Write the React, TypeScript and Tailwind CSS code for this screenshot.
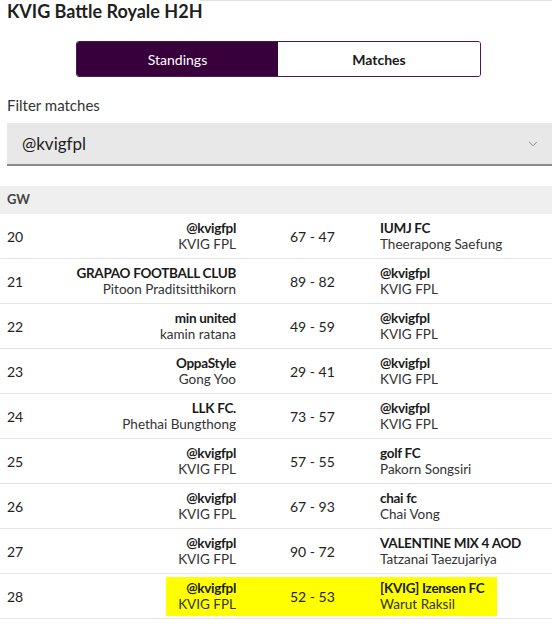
import { ChevronDown } from "lucide-react";

type Match = {
  gw: number;
  home: string;
  homeManager: string;
  score: string;
  away: string;
  awayManager: string;
  highlight?: boolean;
};

const matches: Match[] = [
  { gw: 20, home: "@kvigfpl", homeManager: "KVIG FPL", score: "67 - 47", away: "IUMJ FC", awayManager: "Theerapong Saefung" },
  { gw: 21, home: "GRAPAO FOOTBALL CLUB", homeManager: "Pitoon Praditsitthikorn", score: "89 - 82", away: "@kvigfpl", awayManager: "KVIG FPL" },
  { gw: 22, home: "min united", homeManager: "kamin ratana", score: "49 - 59", away: "@kvigfpl", awayManager: "KVIG FPL" },
  { gw: 23, home: "OppaStyle", homeManager: "Gong Yoo", score: "29 - 41", away: "@kvigfpl", awayManager: "KVIG FPL" },
  { gw: 24, home: "LLK FC.", homeManager: "Phethai Bungthong", score: "73 - 57", away: "@kvigfpl", awayManager: "KVIG FPL" },
  { gw: 25, home: "@kvigfpl", homeManager: "KVIG FPL", score: "57 - 55", away: "golf FC", awayManager: "Pakorn Songsiri" },
  { gw: 26, home: "@kvigfpl", homeManager: "KVIG FPL", score: "67 - 93", away: "chai fc", awayManager: "Chai Vong" },
  { gw: 27, home: "@kvigfpl", homeManager: "KVIG FPL", score: "90 - 72", away: "VALENTINE MIX 4 AOD", awayManager: "Tatzanai Taezujariya" },
  { gw: 28, home: "@kvigfpl", homeManager: "KVIG FPL", score: "52 - 53", away: "[KVIG] Izensen FC", awayManager: "Warut Raksil", highlight: true },
];

function MatchRow({ m }: { m: Match }) {
  return (
    <div className="flex items-center h-[45px] border-b border-[#e4e4e4]">
      <div className="w-[166px] shrink-0 pl-[7px] text-[14px] text-[#222]">{m.gw}</div>
      <div className={`flex items-center w-[331px] h-[39px] shrink-0 ${m.highlight ? "bg-[#ffff00]" : ""}`}>
        <div className="w-[70px] shrink-0 flex flex-col items-end whitespace-nowrap text-[13.5px] leading-[16px]">
          <span className="font-bold text-[#1a1a1a] tracking-[-0.3px]">{m.home}</span>
          <span className="text-[#333]">{m.homeManager}</span>
        </div>
        <div className="ml-[54px] w-[90px] shrink-0 text-[14px] text-[#222]">{m.score}</div>
        <div className="flex flex-col whitespace-nowrap text-[13.5px] leading-[16px]">
          <span className="font-bold text-[#1a1a1a] tracking-[-0.3px]">{m.away}</span>
          <span className="text-[#333]">{m.awayManager}</span>
        </div>
      </div>
    </div>
  );
}

export default function App() {
  return (
    <div className="w-[552px] h-[624px] overflow-hidden bg-white font-['Lato',sans-serif] text-[#1a1a1a]">
      <div className="h-px bg-[#e0e0e0] ml-[200px]" />
      <h1 className="pl-[7px] text-[18px] leading-[20px] font-bold text-[#1f1f1f]">KVIG Battle Royale H2H</h1>

      <div className="mt-[20px] ml-[76px] w-[405px] h-[36px] flex border border-[#4a1a4f] rounded-[3px] overflow-hidden text-[14px]">
        <div className="w-[201px] flex items-center justify-center bg-[#37003c] text-white">Standings</div>
        <div className="flex-1 flex items-center justify-center bg-white font-bold text-[#1a1a1a]">Matches</div>
      </div>

      <div className="mt-[19px] pl-[7px] text-[15px] leading-[18px] text-[#333]">Filter matches</div>

      <div className="mt-[9px] ml-[7px] h-[43px] flex items-center justify-between bg-[#e8e8e8] border-b-2 border-[#8a8a8a] pl-[15px] pr-[12px]">
        <span className="text-[17px] text-[#222]">@kvigfpl</span>
        <ChevronDown className="w-[14px] h-[14px] text-[#777]" strokeWidth={1.5} />
      </div>

      <div className="mt-[20px] h-[28px] flex items-center bg-[#efefef] pl-[7px] text-[13px] font-bold text-[#444]">GW</div>

      <div>
        {matches.map((m) => (
          <MatchRow key={m.gw} m={m} />
        ))}
      </div>
    </div>
  );
}
